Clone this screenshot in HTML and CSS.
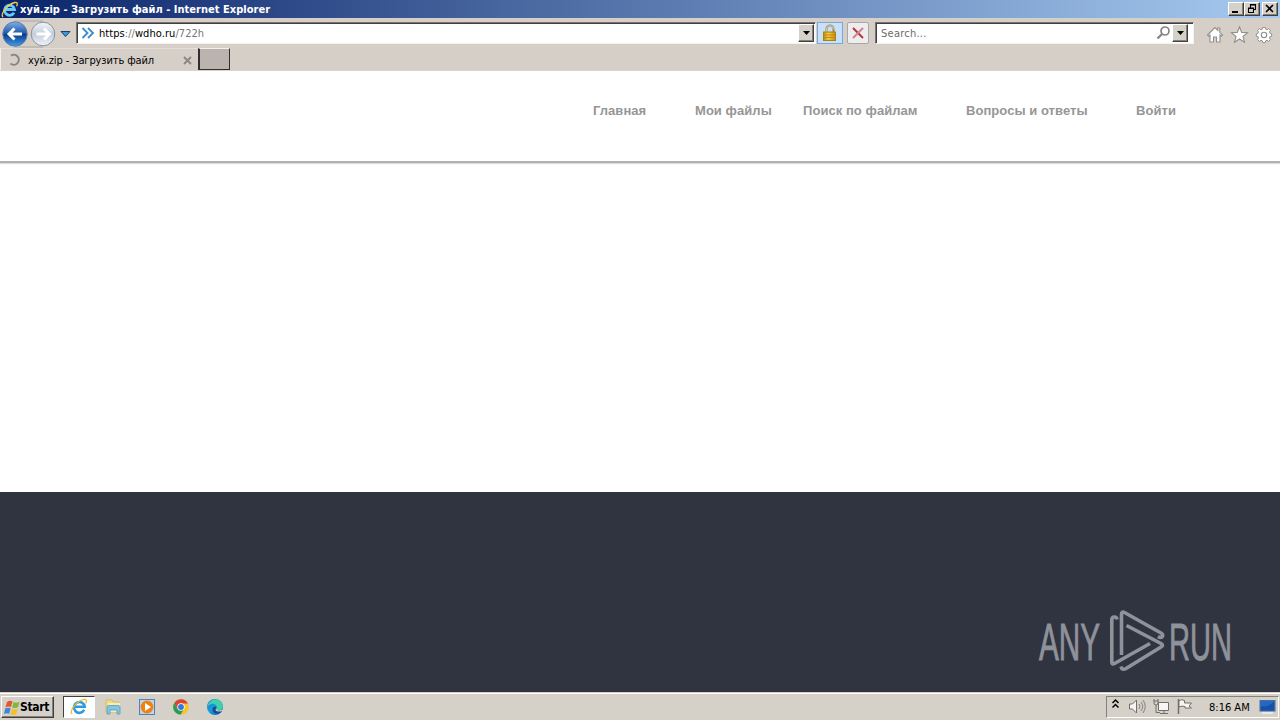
FILE: index.html
```html
<!DOCTYPE html>
<html lang="ru">
<head>
<meta charset="utf-8">
<title>хуй.zip - Загрузить файл</title>
<link rel="stylesheet" href="styles.css">
</head>
<body>
<svg class="defs" width="0" height="0">
  <defs>
    <linearGradient id="blue" x1="0" y1="0" x2="0" y2="1"><stop offset="0" stop-color="#7fb0e8"/><stop offset=".48" stop-color="#1e56a8"/><stop offset=".52" stop-color="#0a3c8c"/><stop offset="1" stop-color="#3fa0ec"/></linearGradient>
    <linearGradient id="pale" x1="0" y1="0" x2="0" y2="1"><stop offset="0" stop-color="#f4f6fa"/><stop offset=".5" stop-color="#c3cddb"/><stop offset="1" stop-color="#eef3fa"/></linearGradient>
    <linearGradient id="gold" x1="0" y1="0" x2="1" y2="0"><stop offset="0" stop-color="#b98a10"/><stop offset=".4" stop-color="#f4cc3c"/><stop offset="1" stop-color="#c58a08"/></linearGradient>
    <linearGradient id="edge" x1="0" y1="0" x2="1" y2="1"><stop offset="0" stop-color="#1777c8"/><stop offset=".45" stop-color="#199be0"/><stop offset="1" stop-color="#0b55a5"/></linearGradient>
    <symbol id="ie" viewBox="0 0 18 18">
      <path d="M14.200 11.800a5.400 5.400 0 1 1 .5-3H5" fill="none" stroke="#2a9be0" stroke-width="2.600"/>
      <path d="M2 16C-1 13.500 6 3 14 1.400c3-.5 3 1.800 1.600 4" fill="none" stroke="#e9bd2d" stroke-width="1.300"/>
    </symbol>
  </defs>
</svg>
<div class="screen">
  <div class="titlebar">
    <svg class="title-icon" width="17" height="17"><path d="M13 11.600A5 5 0 1 1 13.500 8.500H5" fill="none" stroke="#69c8fa" stroke-width="2.800"/><path d="M2 16C-1 13 7 3 14 1.500c3-.5 2.500 2 1.500 3.800" fill="none" stroke="#f2cf4b" stroke-width="1.300"/></svg>
    <span class="title-text">хуй.zip - Загрузить файл - Internet Explorer</span>
    <div class="win-buttons">
      <span class="raised wb"><svg width="12" height="10"><path d="M2 8h6" stroke="#000" stroke-width="2"/></svg></span>
      <span class="raised wb"><svg width="12" height="10"><path d="M4.500 3.500v-3h5v5H8M4 1h6M2.500 4.500h5v4h-5zM2 4h6" fill="none" stroke="#000" stroke-width="1.100"/></svg></span>
      <span class="raised wb close"><svg width="12" height="10"><path d="M2 1l7 7m0-7L2 8" stroke="#000" stroke-width="1.600"/></svg></span>
    </div>
  </div>

  <div class="toolbar">
    <svg class="navs" width="74" height="30">
      <path d="M15 3h28M15 29h28" stroke="#aaa8a5"/>
      <circle cx="15" cy="16" r="12.200" fill="url(#blue)" stroke="#5e7ba4"/>
      <path d="M9 16h13M14.500 10.500L9 16l5.500 5.500" fill="none" stroke="#fff" stroke-width="3"/>
      <circle cx="43" cy="16" r="11.800" fill="url(#pale)" stroke="#8b939d"/>
      <path d="M36.500 16h13M44 10.500l5.500 5.500-5.500 5.500" fill="none" stroke="#fff" stroke-width="3"/>
      <path d="M61 13.500h9l-4.500 5z" fill="#3c9bd8" stroke="#17406e"/>
    </svg>
    <div class="field address">
      <svg class="chev" width="14" height="14"><path d="M1.500 2l5 5-5 5M7 2l5 5-5 5" fill="none" stroke="#3f8fd0" stroke-width="1.900"/></svg>
      <span class="url">https<i>://</i>wdho.ru<i>/722h</i></span>
      <span class="raised drop"><svg width="7" height="4"><path d="M0 0h7L3.500 4z"/></svg></span>
    </div>
    <div class="lock"><svg width="16" height="18"><path d="M4.500 9V5a3.500 3.500 0 0 1 7 0v4" fill="none" stroke="#9c8a55" stroke-width="2"/><path d="M4.500 8V5a3.500 3.500 0 0 1 7 0" fill="none" stroke="#e8e0c0" stroke-width=".7"/><rect x="1.500" y="8" width="12" height="8.500" fill="url(#gold)" stroke="#ad7e12"/><path d="M2 11h11M2 13.500h11" stroke="#bf8d16"/></svg></div>
    <div class="stop"><svg width="12" height="12"><path d="M1 1l10 10" stroke="#b8323a" stroke-width="2"/><path d="M11 1L1 11" stroke="#c9878a" stroke-width="2"/></svg></div>
    <div class="field search">
      <span class="hint">Search...</span>
      <svg class="glass" width="16" height="16"><circle cx="9" cy="6" r="4" fill="none" stroke="#858585" stroke-width="1.700"/><path d="M6 9l-4.500 4.500" stroke="#858585" stroke-width="2.300"/></svg>
      <span class="raised drop"><svg width="7" height="4"><path d="M0 0h7L3.500 4z"/></svg></span>
    </div>
    <svg class="tools" width="72" height="22">
      <g fill="#fff" stroke="#918f8c" stroke-width="1.100">
        <path d="M1.500 11L9 3.500l2.800 2.800V4h2v4.300l2.700 2.700-1.300 1.200-1.200-1.100V18h-3.500v-5h-3v5H4v-6.900l-1.200 1.100z"/>
        <path d="M33.500 3l2.200 5.400 5.800.4-4.500 3.700 1.500 5.700-5-3.200-5 3.200 1.500-5.700-4.500-3.700 5.800-.4z"/>
        <path transform="translate(58 11) scale(.88) translate(-58 -11.500)" d="M56.500 3h3l.5 2 1.400.5 1.900-1.100 2 2-1.100 1.900.5 1.300 2 .5v2.800l-2 .5-.5 1.400 1.100 1.900-2 2-1.900-1.100-1.400.5-.5 2h-3l-.5-2-1.400-.5-1.900 1.100-2-2 1.100-1.900-.5-1.400-2-.5v-2.800l2-.5.5-1.300-1.100-1.900 2-2 1.900 1.100L56 5z"/>
        <circle cx="58" cy="11" r="2.700"/>
      </g>
    </svg>
  </div>

  <div class="tabs">
    <div class="tab">
      <svg class="spin" width="14" height="14"><path d="M4 2.600A5 5 0 1 1 3.500 10.500" fill="none" stroke="#888581" stroke-width="2"/></svg>
      <span class="tab-text">хуй.zip - Загрузить файл</span>
      <svg class="tab-x" width="9" height="9"><path d="M1 1l7 7m0-7L1 8" stroke="#8c8681" stroke-width="1.800"/></svg>
    </div>
    <div class="newtab"></div>
  </div>

  <main class="page">
    <nav class="menu">
      <a class="m-home">Главная</a><a class="m-files">Мои файлы</a><a class="m-find">Поиск по файлам</a><a class="m-faq">Вопросы и ответы</a><a class="m-login">Войти</a>
    </nav>
    <div class="blank"></div>
    <footer class="footer">
      <svg class="watermark" width="210" height="80" viewBox="1035 600 210 80">
        <g class="wm-text">
          <text transform="translate(1039 659.500) scale(1 1.500)" textLength="61" lengthAdjust="spacingAndGlyphs">ANY</text>
          <text transform="translate(1169 659.500) scale(1 1.500)" textLength="63" lengthAdjust="spacingAndGlyphs">RUN</text>
        </g>
        <g fill="none" stroke="#8e929a" stroke-width="3.600" stroke-linejoin="round">
          <path d="M1117 619.500q-.5-3-3-2.500-2.200.5-2.200 2.500v42.500q0 3 2.700 1.500L1150 643.500"/>
          <path d="M1121.500 655V614.500q0-3.500 3-2L1161 633q3 2 1 4-1.500 1-4-.5"/>
          <path d="M1126.500 625.500L1161 643.500q3 1.700 0 3.500L1126 668.500q-4 2.300-5-2"/>
        </g>
      </svg>
    </footer>
  </main>

  <div class="taskbar">
    <div class="raised start">
      <svg width="17" height="17"><path d="M3 3q3-2 5.500-.5L7 8Q4 7 1.500 8.500z" fill="#e4572b"/><path d="M9.500 3q3 1.500 6-.3L14 8.300q-3 1.500-5.700.1z" fill="#7fb83c"/><path d="M1.200 9.500q3-1.500 5.500-.2l-1.500 5.500Q2.500 13.500 0 15z" fill="#3e87d4"/><path d="M8 9.700q3 1.400 5.700-.1l-1.500 5.600q-3 1.500-5.700 0z" fill="#f6bf27"/></svg>
      <span class="start-text">Start</span>
    </div>
    <div class="task active"><svg width="18" height="18"><use href="#ie"/></svg></div>
    <div class="task"><svg width="18" height="18"><path d="M2 2h6l1 2h6v10H2z" fill="#f3dc86" stroke="#d7bd64"/><path d="M4 5h12v9H4z" fill="#f9edb4"/><path d="M3 9q0-1.500 2-1.500h9q2 0 2 1.500v7h-3v-4H6v4H3z" fill="#83c5e4" stroke="#559dbd" stroke-width=".8"/></svg></div>
    <div class="task"><svg width="18" height="18"><rect x="1.500" y="1.500" width="15" height="15" fill="#b9d8ee" stroke="#4f82b5"/><circle cx="9" cy="9" r="6.400" fill="#ef8113"/><path d="M7 5l6 4-6 4z" fill="#fff"/></svg></div>
    <div class="task"><svg width="18" height="18"><circle cx="9" cy="9" r="7.800" fill="#f5c52b"/><path d="M2.200 5.100A7.800 7.800 0 0 1 16 5.500H9L5.600 11z" fill="#dc4437"/><path d="M2.200 5.100A7.800 7.800 0 0 0 8.500 16.800L12 11 5.600 11z" fill="#299d57"/><circle cx="9" cy="9" r="3.700" fill="#fff"/><circle cx="9" cy="9" r="2.900" fill="#3378df"/></svg></div>
    <div class="task"><svg width="18" height="18"><circle cx="9" cy="9" r="8" fill="url(#edge)"/><path d="M2 7C4 0 16-1 17 8c0 4-4 5-6.500 3.500C12 8 9 5 5.500 6 3.500 6.500 2 8 1.500 9z" fill="#42cfaa"/><path d="M10.500 9c-2 3 1 5 5.500 4-3 4-9 3-9.500-1C6.300 9 8.500 7.500 10.500 9z" fill="#174d8f"/><path d="M10.500 9q-1 2.300 1.500 3.200 3 .7 5-1.200l-1 2q-5 1.500-6.500-1z" fill="#d5d0c8"/></svg></div>
    <div class="tray">
      <svg width="96" height="20">
        <path d="M5.500 6L8.500 3l3 3M5.500 10.500l3-3 3 3" fill="none" stroke="#000" stroke-width="1.500"/>
        <g fill="#f6f5f3" stroke="#72706d" transform="translate(1 -1)">
          <path d="M21.500 8h3l4-4v13l-4-4h-3z"/><path d="M31 8q2 2.500 0 5M33 6q3.500 4.500 0 9M35 4q4.500 6.500 0 13" fill="none" stroke="#85827f"/>
          <path d="M50.500 6.500h10v8h-10zM52 17.500h8M56 14.500v3" /><path d="M46 3v4q0 2 2 2t2-2V3M45.500 5h5M48 9v7.500h4" fill="none"/>
          <path d="M70.500 3v15" stroke-width="1.500"/><path d="M71 4.500q3-1.500 5.500 0v2.500h7l-2.500 3 2.500 2H77v-1.500q-3-1-6 .5z"/>
        </g>
      </svg>
      <span class="clock">8:16 AM</span>
      <svg class="desk" width="17" height="16"><rect x="1" y="1.500" width="15" height="10.500" fill="#2467c5" stroke="#4e6d96"/><path d="M2 7q6 2 13-4v8.500H2z" fill="#1650a7"/><path d="M3 14h11" stroke="#eef1f6" stroke-width="1.500"/></svg>
    </div>
  </div>
</div>
</body>
</html>
```
FILE: styles.css
```css
* { box-sizing: border-box; }
body { margin: 0; background: #fff; }
.defs { display: block; position: absolute; }
svg { display: block; flex: none; }
.screen {
  width: 1280px; height: 720px; overflow: hidden;
  display: flex; flex-direction: column;
  font: 11px "DejaVu Sans Condensed", "DejaVu Sans", sans-serif;
  color: #000; white-space: nowrap;
}
.raised {
  background: #d5d0c8;
  border: 1px solid; border-color: #fff #404040 #404040 #fff;
  box-shadow: inset -1px -1px #85817b;
  display: flex; align-items: center; justify-content: center;
}
.titlebar {
  height: 18px; flex: none; display: flex; align-items: center; padding: 0 2px;
  background: linear-gradient(90deg, #0a246a, #a6caf0);
}
.title-icon { margin-left: -1px; }
.title-text { color: #fff; font-weight: bold; margin-left: 2px; letter-spacing: .03px; }
.win-buttons { margin-left: auto; display: flex; }
.wb { width: 16px; height: 14px; }
.close { margin-left: 2px; }

.toolbar { height: 30px; flex: none; display: flex; background: #d5cfc8; }
.navs { margin-right: 2px; }
.field {
  height: 22px; margin-top: 4px; background: #fff; display: flex; align-items: center;
  border: 1px solid; border-color: #77736e #f5f3f0 #f5f3f0 #77736e;
  box-shadow: inset 1px 1px #404040;
}
.address { width: 740px; padding-left: 4px; padding-right: 1px; }
.url { margin: 1px 0 0 4px; letter-spacing: .06px; }
.url i { font-style: normal; color: #77777a; }
.drop { width: 16px; height: 18px; margin-left: auto; }
.lock { width: 26px; height: 22px; margin: 4px 0 0 1px; border: 1px solid #77a9df; background: #c9e0f9; display: flex; align-items: center; justify-content: center; }
.stop { width: 22px; height: 22px; margin: 4px 6px 0 4px; border: 1px solid #aaa7a5; border-radius: 2px; background: #eeecef; display: flex; align-items: center; justify-content: center; }
.search { width: 319px; padding: 0 5px 0 5px; }
.hint { color: #6b6b6b; letter-spacing: .25px; margin-top: 1px; }
.glass { margin-left: auto; }
.glass + .drop { margin-left: 0; }
.tools { margin: 6px 0 0 12px; }

.tabs { height: 23px; flex: none; display: flex; background: #d5cfc8; border-bottom: 1px solid #d8d4cf; }
.tab { width: 198px; display: flex; align-items: center; padding: 1px 6px 0 6px; border-left: 1px solid #f4f2ef; border-top: 1px solid #e3dfda; }
.tab-text { margin-left: 7px; letter-spacing: -.12px; }
.tab-x { margin-left: auto; }
.newtab { width: 32px; height: 22px; background: #bbb3ae; border: 1px solid; border-color: #f2efec #302f2e #302f2e #302f2e; border-left-width: 2px; }

.page { flex: 1; display: flex; flex-direction: column; background: #fff; }
.menu { height: 92px; border-bottom: 2px solid #b0b1b0; box-shadow: 0 1px 1px #ddd; padding: 32px 0 0 593px; display: flex; align-items: flex-start; font: bold 13px/16px "Liberation Sans", Arial, sans-serif; letter-spacing: .05px; color: #969696; }
.m-home { width: 102px; }
.m-files { width: 108px; }
.m-find { width: 163px; }
.m-faq { width: 170px; }
.blank { height: 329px; }
.footer { height: 200px; background: #303440; padding: 108px 35px 0; display: flex; justify-content: flex-end; }
.watermark { overflow: visible; }
.wm-text { font: 34px "Liberation Sans Narrow", "Liberation Sans", sans-serif; fill: #8e929a; stroke: #8e929a; stroke-width: .6px; }

.taskbar { height: 28px; flex: none; display: flex; align-items: center; background: #d5d0c8; border-top: 1px solid #d5d0c8; box-shadow: inset 0 1px #fff; padding: 1px 0 0 1px; }
.start { width: 53px; height: 22px; justify-content: flex-start; padding-left: 2px; margin-right: 9px; }
.start-text { font-weight: bold; font-size: 12px; margin-left: -1px; letter-spacing: -.35px; }
.task { width: 32px; height: 22px; margin-right: 2px; display: flex; align-items: center; justify-content: center; }
.active { background: #fff; border: 1px solid; border-color: #404040 #fff #fff #404040; }
.tray { width: 173px; height: 22px; margin-left: auto; margin-right: 1px; border: 1px solid; border-color: #85817b #fff #fff #85817b; display: flex; align-items: center; }
.clock { margin-left: 6px; }
.desk { margin-left: auto; margin-right: 2px; }
```
